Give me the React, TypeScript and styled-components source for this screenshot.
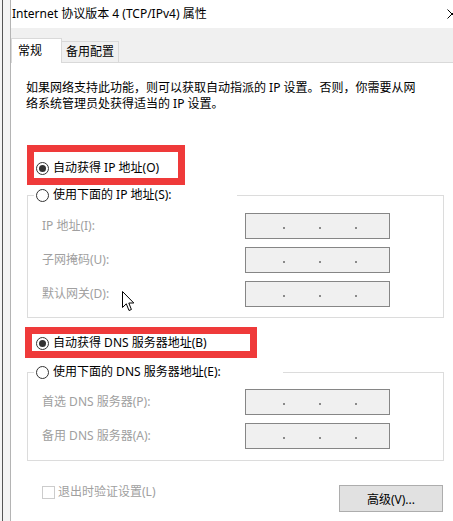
import React from "react";
import styled, { createGlobalStyle } from "styled-components";

const GlobalStyle = createGlobalStyle`
  html, body { margin: 0; padding: 0; background: #fff; overflow: hidden; }
  body {
    font-family: "Noto Sans", "Noto Sans CJK SC", sans-serif;
    font-size: 12px;
    color: #000;
  }
  * { box-sizing: border-box; }
`;

const Page = styled.div`
  position: relative;
  display: flex;
  width: 453px;
  height: 521px;
  overflow: hidden;
`;

const LeftStrip = styled.div`
  flex: none;
  width: 10px;
  background: linear-gradient(to right, #f4f4f4 2px, #555 2px, #555 3px, #f4f4f4 3px);
`;

const Window = styled.div`
  flex: 1;
  min-width: 0;
  display: flex;
  flex-direction: column;
  border-left: 1px solid #b4b4b4;
  background: #fff;
`;

const TitleBar = styled.div`
  height: 28px;
  flex: none;
  display: flex;
  align-items: center;
  justify-content: space-between;
  padding-left: 1px;
`;

const Title = styled.span`
  line-height: 16px;
  white-space: nowrap;
`;

const CloseIcon = styled.svg`
  width: 10px;
  height: 10px;
  margin-right: -4px;
  flex: none;
`;

const TabStrip = styled.div`
  height: 35px;
  flex: none;
  display: flex;
  align-items: flex-end;
  background: #f0f0f0;
  border-bottom: 1px solid #d9d9d9;
`;

const Tab = styled.div<{ $active?: boolean }>`
  line-height: 16px;
  white-space: nowrap;
  ${(p) =>
    p.$active
      ? `
    width: 51px;
    height: 25px;
    margin-bottom: -1px;
    padding: 4px 0 0 6px;
    background: #fff;
    border: 1px solid #d9d9d9;
    border-bottom: none;
  `
      : `
    width: 57px;
    height: 21px;
    padding: 2px 0 0 4px;
    background: #f0f0f0;
    border-top: 1px solid #d9d9d9;
    border-right: 1px solid #d9d9d9;
  `}
`;

const Panel = styled.div`
  flex: 1;
  display: flex;
  flex-direction: column;
  align-items: flex-start;
  padding: 17px 0 0 15px;
  background: #fff;
`;

const Paragraph = styled.p`
  margin: 0;
  line-height: 16px;
  white-space: nowrap;
`;

const Line = styled.span`
  display: block;
`;

const Highlight = styled.div<{ $w: number; $mt: number; $ml: number; $pt: number; $pl: number; $h: number }>`
  width: ${(p) => p.$w}px;
  height: ${(p) => p.$h}px;
  margin-top: ${(p) => p.$mt}px;
  margin-left: ${(p) => p.$ml}px;
  padding: ${(p) => p.$pt}px 0 0 ${(p) => p.$pl}px;
  border: 7px solid #ef3a3a;
`;

const RadioRow = styled.label`
  display: flex;
  align-items: center;
  gap: 4px;
  height: 16px;
  line-height: 16px;
  white-space: nowrap;
`;

const Radio = styled.span<{ $checked?: boolean }>`
  flex: none;
  width: 13px;
  height: 13px;
  border-radius: 50%;
  border: 1px solid #333;
  background: #fff;
  display: inline-flex;
  align-items: center;
  justify-content: center;
  &::after {
    content: "";
    width: 7px;
    height: 7px;
    border-radius: 50%;
    background: ${(p) => (p.$checked ? "#333" : "transparent")};
  }
`;

const Group = styled.fieldset<{ $mt: number; $pt: number; $pb: number }>`
  width: 417px;
  margin: ${(p) => p.$mt}px 0 0 1px;
  padding: ${(p) => p.$pt}px 0 ${(p) => p.$pb}px 14px;
  border: 1px solid #dcdcdc;
  min-width: 0;
`;

const Legend = styled.legend<{ $w: number }>`
  width: ${(p) => p.$w}px;
  margin-left: -8px;
  padding: 0 0 0 2px;
  line-height: 16px;
`;

const Fields = styled.div`
  display: grid;
  grid-template-columns: 203px 145px;
  row-gap: 8px;
  align-items: center;
`;

const FieldLabel = styled.span`
  color: #a0a0a0;
  line-height: 16px;
  white-space: nowrap;
`;

const IpBox = styled.div`
  width: 145px;
  height: 26px;
  border: 1px solid #868686;
  background: #f0f0f0;
  display: flex;
  align-items: center;
  padding: 3px 0 0 37px;
  gap: 34px;
`;

const Dot = styled.span`
  width: 2px;
  height: 2px;
  background: #8a8a8a;
`;

const BottomRow = styled.div`
  width: 417px;
  margin: 24px 0 0 1px;
  display: flex;
  justify-content: space-between;
  align-items: flex-start;
`;

const CheckRow = styled.label`
  display: flex;
  align-items: center;
  gap: 3px;
  height: 16px;
  margin-top: -1px;
  padding-left: 15px;
  color: #a0a0a0;
  line-height: 16px;
  white-space: nowrap;
`;

const CheckBox = styled.span`
  width: 13px;
  height: 13px;
  border: 1px solid #cccccc;
  background: #fff;
`;

const Button = styled.button`
  width: 104px;
  height: 27px;
  margin-right: 1px;
  border: 1px solid #adadad;
  background: #e1e1e1;
  font: inherit;
  color: #000;
  padding: 0;
`;

const Cursor = styled.svg`
  position: absolute;
  left: 122px;
  top: 291px;
  width: 14px;
  height: 21px;
`;

const IpField = () => (
  <IpBox>
    <Dot />
    <Dot />
    <Dot />
  </IpBox>
);

export default function App() {
  return (
    <>
      <GlobalStyle />
      <Page>
        <LeftStrip />
        <Window>
          <TitleBar>
            <Title>Internet 协议版本 4 (TCP/IPv4) 属性</Title>
            <CloseIcon viewBox="0 0 10 10">
              <path d="M0.5 0.5 L9.5 9.5 M9.5 0.5 L0.5 9.5" stroke="#000" strokeWidth="1" />
            </CloseIcon>
          </TitleBar>
          <TabStrip>
            <Tab $active>常规</Tab>
            <Tab>备用配置</Tab>
          </TabStrip>
          <Panel>
            <Paragraph>
              <Line>如果网络支持此功能，则可以获取自动指派的 IP 设置。否则，你需要从网</Line>
              <Line>络系统管理员处获得适当的 IP 设置。</Line>
            </Paragraph>

            <Highlight $w={158} $h={40} $mt={33} $ml={1} $pt={8} $pl={2}>
              <RadioRow>
                <Radio $checked />
                自动获得 IP 地址(O)
              </RadioRow>
            </Highlight>

            <Group $mt={2} $pt={10} $pb={10}>
              <Legend $w={203}>
                <RadioRow>
                  <Radio />
                  使用下面的 IP 地址(S):
                </RadioRow>
              </Legend>
              <Fields>
                <FieldLabel>IP 地址(I):</FieldLabel>
                <IpField />
                <FieldLabel>子网掩码(U):</FieldLabel>
                <IpField />
                <FieldLabel>默认网关(D):</FieldLabel>
                <IpField />
              </Fields>
            </Group>

            <Highlight $w={232} $h={31} $mt={9} $ml={-1} $pt={1} $pl={4}>
              <RadioRow>
                <Radio $checked />
                自动获得 DNS 服务器地址(B)
              </RadioRow>
            </Highlight>

            <Group $mt={6} $pt={9} $pb={11}>
              <Legend $w={249}>
                <RadioRow>
                  <Radio />
                  使用下面的 DNS 服务器地址(E):
                </RadioRow>
              </Legend>
              <Fields>
                <FieldLabel>首选 DNS 服务器(P):</FieldLabel>
                <IpField />
                <FieldLabel>备用 DNS 服务器(A):</FieldLabel>
                <IpField />
              </Fields>
            </Group>

            <BottomRow>
              <CheckRow>
                <CheckBox />
                退出时验证设置(L)
              </CheckRow>
              <Button>高级(V)...</Button>
            </BottomRow>
          </Panel>
        </Window>
        <Cursor viewBox="0 0 14 21">
          <path
            d="M0.5 0.5 L0.5 16.5 L4.3 12.8 L7 19.5 L9.4 18.5 L6.8 12 L11.8 12 Z"
            fill="#fff"
            stroke="#000"
            strokeWidth="1"
            strokeLinejoin="miter"
          />
        </Cursor>
      </Page>
    </>
  );
}
